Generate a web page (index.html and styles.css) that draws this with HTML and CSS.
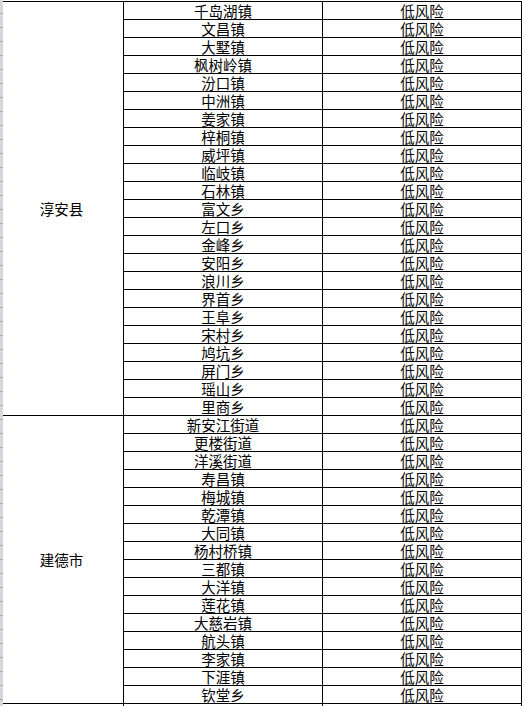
FILE: index.html
```html
<!DOCTYPE html>
<html lang="zh-CN">
<head>
<meta charset="utf-8">
<title>风险等级</title>
<link rel="stylesheet" href="styles.css">
</head>
<body>
<div class="sheet">
  <div class="row-header"></div>
  <div class="grid">
    <div class="cell county county-a">淳安县</div>
    <div class="cell">千岛湖镇</div><div class="cell">低风险</div>
    <div class="cell">文昌镇</div><div class="cell">低风险</div>
    <div class="cell">大墅镇</div><div class="cell">低风险</div>
    <div class="cell">枫树岭镇</div><div class="cell">低风险</div>
    <div class="cell">汾口镇</div><div class="cell">低风险</div>
    <div class="cell">中洲镇</div><div class="cell">低风险</div>
    <div class="cell">姜家镇</div><div class="cell">低风险</div>
    <div class="cell">梓桐镇</div><div class="cell">低风险</div>
    <div class="cell">威坪镇</div><div class="cell">低风险</div>
    <div class="cell">临岐镇</div><div class="cell">低风险</div>
    <div class="cell">石林镇</div><div class="cell">低风险</div>
    <div class="cell">富文乡</div><div class="cell">低风险</div>
    <div class="cell">左口乡</div><div class="cell">低风险</div>
    <div class="cell">金峰乡</div><div class="cell">低风险</div>
    <div class="cell">安阳乡</div><div class="cell">低风险</div>
    <div class="cell">浪川乡</div><div class="cell">低风险</div>
    <div class="cell">界首乡</div><div class="cell">低风险</div>
    <div class="cell">王阜乡</div><div class="cell">低风险</div>
    <div class="cell">宋村乡</div><div class="cell">低风险</div>
    <div class="cell">鸠坑乡</div><div class="cell">低风险</div>
    <div class="cell">屏门乡</div><div class="cell">低风险</div>
    <div class="cell">瑶山乡</div><div class="cell">低风险</div>
    <div class="cell">里商乡</div><div class="cell">低风险</div>
    <div class="cell county county-b">建德市</div>
    <div class="cell">新安江街道</div><div class="cell">低风险</div>
    <div class="cell">更楼街道</div><div class="cell">低风险</div>
    <div class="cell">洋溪街道</div><div class="cell">低风险</div>
    <div class="cell">寿昌镇</div><div class="cell">低风险</div>
    <div class="cell">梅城镇</div><div class="cell">低风险</div>
    <div class="cell">乾潭镇</div><div class="cell">低风险</div>
    <div class="cell">大同镇</div><div class="cell">低风险</div>
    <div class="cell">杨村桥镇</div><div class="cell">低风险</div>
    <div class="cell">三都镇</div><div class="cell">低风险</div>
    <div class="cell">大洋镇</div><div class="cell">低风险</div>
    <div class="cell">莲花镇</div><div class="cell">低风险</div>
    <div class="cell">大慈岩镇</div><div class="cell">低风险</div>
    <div class="cell">航头镇</div><div class="cell">低风险</div>
    <div class="cell">李家镇</div><div class="cell">低风险</div>
    <div class="cell">下涯镇</div><div class="cell">低风险</div>
    <div class="cell">钦堂乡</div><div class="cell">低风险</div>
    <div class="cell"></div><div class="cell"></div><div class="cell"></div>
  </div>
</div>
</body>
</html>
```
FILE: styles.css
```css
html, body {
  margin: 0;
  padding: 0;
  background: #fff;
  overflow: hidden;
}

body {
  width: 522px;
  height: 706px;
  font-family: "Noto Sans CJK SC", "Noto Sans", sans-serif;
  font-size: 14.5px;
  color: #000;
}

.sheet {
  display: flex;
  align-items: flex-start;
}

.row-header {
  flex: 0 0 3px;
  align-self: stretch;
  height: 706px;
  background:
    repeating-linear-gradient(to bottom, #d6d6de 0 13px, #a8a8b4 13px 14px);
}

.grid {
  display: grid;
  grid-template-columns: 120px 198px 198px;
  grid-auto-rows: 17px;
  gap: 1px;
  background: #000;
  margin-top: 1px;
  padding: 1px 1px 0 0;
}

.cell {
  background: #fff;
  text-align: center;
  line-height: 17px;
  height: 17px;
  white-space: nowrap;
}

.county {
  display: flex;
  align-items: center;
  justify-content: center;
  height: auto;
  padding-right: 3px;
}

.county-a {
  grid-row: 1 / span 23;
}

.county-b {
  grid-row: 24 / span 16;
}
```
